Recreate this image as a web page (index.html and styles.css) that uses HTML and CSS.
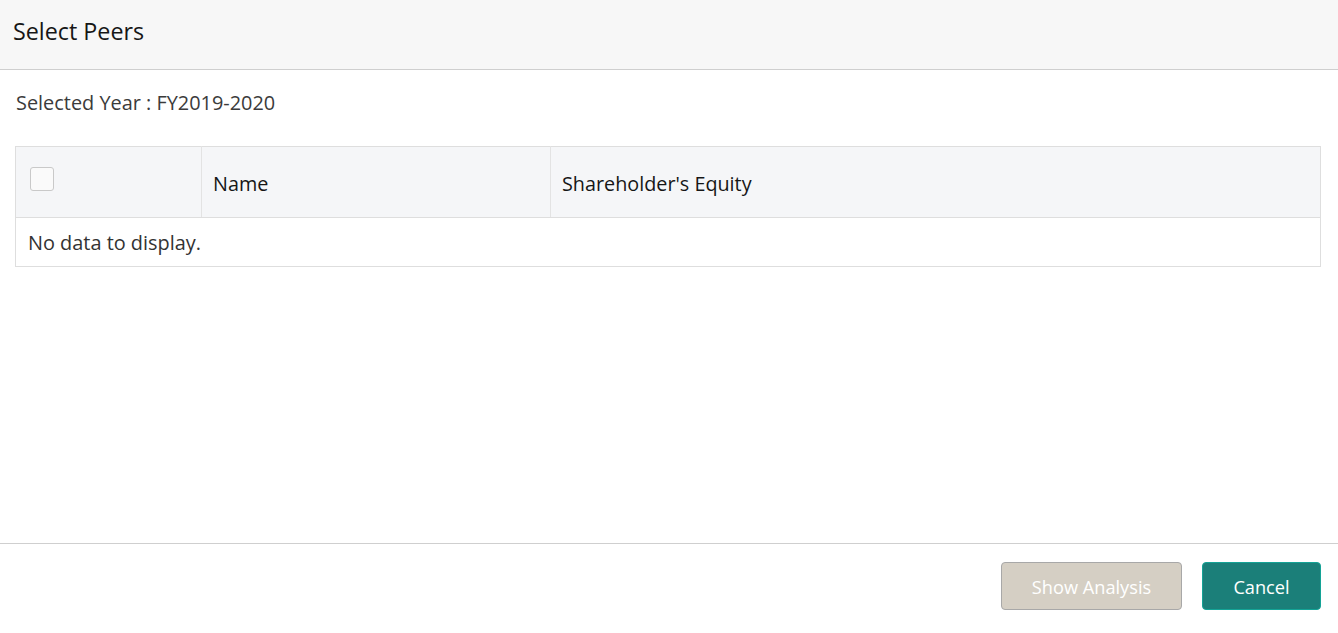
FILE: index.html
```html
<!DOCTYPE html>
<html>
<head>
<meta charset="utf-8">
<link rel="stylesheet" href="styles.css">
</head>
<body>
<div class="dialog">
  <header class="dlg-header">
    <h1 class="dlg-title">Select Peers</h1>
  </header>
  <main class="dlg-body">
    <div class="year">Selected Year : FY2019-2020</div>
    <table class="grid">
      <thead>
        <tr>
          <th class="col-check"><span class="checkbox"></span></th>
          <th class="col-name">Name</th>
          <th class="col-equity">Shareholder's Equity</th>
        </tr>
      </thead>
      <tbody>
        <tr><td colspan="3" class="empty">No data to display.</td></tr>
      </tbody>
    </table>
  </main>
  <footer class="dlg-footer">
    <button class="btn btn-disabled">Show Analysis</button>
    <button class="btn btn-primary">Cancel</button>
  </footer>
</div>
</body>
</html>
```
FILE: styles.css
```css
html, body {
  margin: 0;
  padding: 0;
  background: #fff;
}
body {
  font-family: "Open Sans", "Noto Sans", sans-serif;
  color: #333;
}
.dialog {
  width: 1338px;
  height: 633px;
  display: flex;
  flex-direction: column;
}
.dlg-header {
  background: #f7f7f7;
  border-bottom: 1px solid #cfcfcf;
  display: flex;
  align-items: center;
  padding: 0 13px;
  box-sizing: border-box;
  flex: none;
  height: 70px;
}
.dlg-title {
  margin: 0;
  font-size: 23.3px;
  font-weight: 400;
  color: #161616;
  position: relative;
  top: -4px;
}
.dlg-body {
  flex: 1;
  padding: 0 17px 0 15px;
}
.year {
  margin: 19px 0 0 1px;
  font-size: 19.9px;
  line-height: 28px;
  color: #3b3b3b;
  height: 57px;
}
.grid {
  width: 100%;
  border-collapse: collapse;
  border: 1px solid #dedede;
}
.grid th {
  background: #f5f6f8;
  height: 68px;
  text-align: left;
  font-weight: 400;
  font-size: 19.8px;
  color: #161616;
  padding: 2px 11px 0;
  border-right: 1px solid #e3e3e3;
  border-bottom: 1px solid #dedede;
  vertical-align: middle;
}
.grid th:last-child { border-right: none; }
.col-check { width: 157px; padding: 0 14px !important; vertical-align: middle; }
.col-name { width: 326px; }
.checkbox {
  display: block;
  width: 24px;
  height: 24px;
  box-sizing: border-box;
  border: 1px solid #c9c9c9;
  border-radius: 3px;
  background: #fafafa;
  position: relative;
  top: -3px;
}
.empty {
  height: 47px;
  padding: 1px 12px 0;
  font-size: 19.9px;
  color: #333;
  vertical-align: middle;
}
.dlg-footer {
  flex: none;
  height: 90px;
  border-top: 1px solid #cfcfcf;
  display: flex;
  justify-content: flex-end;
  align-items: flex-start;
  gap: 20px;
  padding: 18px 17px 0 0;
  box-sizing: border-box;
}
.btn {
  height: 48px;
  border-radius: 4px;
  font-family: inherit;
  font-size: 18.2px;
  color: #fff;
  padding: 2px 0 0;
}
.btn-disabled {
  width: 181px;
  background: #d5cfc4;
  border: 1px solid #a8a8a8;
}
.btn-primary {
  width: 119px;
  background: #1b7f79;
  border: 1px solid #14a396;
}
```
